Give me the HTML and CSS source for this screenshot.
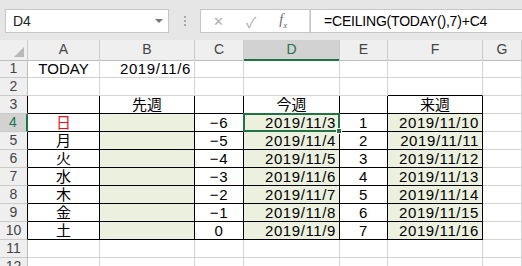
FILE: index.html
```html
<!DOCTYPE html>
<html lang="ja">
<head>
    <meta charset="UTF-8">
    <meta name="viewport" content="width=device-width, initial-scale=1.0">
    <title>CEILING TODAY</title>
    <link rel="stylesheet" href="styles.css">
</head>
<body>
    <!-- 数式バー -->
    <div class="toolbar">
        <div class="namebox">D4<span class="arrow"></span></div>
        <div class="dots"><i></i><i></i><i></i></div>
        <div class="fbuttons">
            <span class="btn-x">✕</span>
            <span class="btn-ok">✓</span>
            <span class="btn-fx"><i>f</i><sub>x</sub></span>
        </div>
        <div class="formula">=CEILING(TODAY(),7)+C4</div>
    </div>

    <!-- シート -->
    <div class="sheet">
        <div class="row head">
            <div class="ch corner"><span class="tri"></span></div>
            <div class="ch">A</div>
            <div class="ch">B</div>
            <div class="ch">C</div>
            <div class="ch active-col">D</div>
            <div class="ch">E</div>
            <div class="ch">F</div>
            <div class="ch">G</div>
        </div>
        <div class="row">
            <div class="rh">1</div>
            <div class="c ctr">TODAY</div>
            <div class="c num">2019/11/6</div>
            <div class="c"></div><div class="c"></div><div class="c"></div><div class="c"></div><div class="c"></div>
        </div>
        <div class="row">
            <div class="rh">2</div>
            <div class="c"></div><div class="c"></div><div class="c"></div><div class="c"></div><div class="c"></div>
            <div class="c bb"></div>
            <div class="c"></div>
        </div>
        <div class="row">
            <div class="rh br">3</div>
            <div class="c br bb"></div>
            <div class="c br bb jp">先週</div>
            <div class="c br bb"></div>
            <div class="c br bb jp">今週</div>
            <div class="c br bb"></div>
            <div class="c br bb jp">来週</div>
            <div class="c"></div>
        </div>
        <div class="row">
            <div class="rh active-row">4</div>
            <div class="c br bb jp red">日</div>
            <div class="c br bb fill"></div>
            <div class="c br bb ctr num-c">−6</div>
            <div class="c br bb fill num sel-cell">2019/11/3<span class="sel"><span class="handle"></span></span></div>
            <div class="c br bb ctr num-c">1</div>
            <div class="c br bb fill num">2019/11/10</div>
            <div class="c"></div>
        </div>
        <div class="row">
            <div class="rh br">5</div>
            <div class="c br bb jp">月</div>
            <div class="c br bb fill"></div>
            <div class="c br bb ctr num-c">−5</div>
            <div class="c br bb fill num">2019/11/4</div>
            <div class="c br bb ctr num-c">2</div>
            <div class="c br bb fill num">2019/11/11</div>
            <div class="c"></div>
        </div>
        <div class="row">
            <div class="rh br">6</div>
            <div class="c br bb jp">火</div>
            <div class="c br bb fill"></div>
            <div class="c br bb ctr num-c">−4</div>
            <div class="c br bb fill num">2019/11/5</div>
            <div class="c br bb ctr num-c">3</div>
            <div class="c br bb fill num">2019/11/12</div>
            <div class="c"></div>
        </div>
        <div class="row">
            <div class="rh br">7</div>
            <div class="c br bb jp">水</div>
            <div class="c br bb fill"></div>
            <div class="c br bb ctr num-c">−3</div>
            <div class="c br bb fill num">2019/11/6</div>
            <div class="c br bb ctr num-c">4</div>
            <div class="c br bb fill num">2019/11/13</div>
            <div class="c"></div>
        </div>
        <div class="row">
            <div class="rh br">8</div>
            <div class="c br bb jp">木</div>
            <div class="c br bb fill"></div>
            <div class="c br bb ctr num-c">−2</div>
            <div class="c br bb fill num">2019/11/7</div>
            <div class="c br bb ctr num-c">5</div>
            <div class="c br bb fill num">2019/11/14</div>
            <div class="c"></div>
        </div>
        <div class="row">
            <div class="rh br">9</div>
            <div class="c br bb jp">金</div>
            <div class="c br bb fill"></div>
            <div class="c br bb ctr num-c">−1</div>
            <div class="c br bb fill num">2019/11/8</div>
            <div class="c br bb ctr num-c">6</div>
            <div class="c br bb fill num">2019/11/15</div>
            <div class="c"></div>
        </div>
        <div class="row">
            <div class="rh br">10</div>
            <div class="c br bb jp">土</div>
            <div class="c br bb fill"></div>
            <div class="c br bb ctr num-c">0</div>
            <div class="c br bb fill num">2019/11/9</div>
            <div class="c br bb ctr num-c">7</div>
            <div class="c br bb fill num">2019/11/16</div>
            <div class="c"></div>
        </div>
        <div class="row">
            <div class="rh">11</div>
            <div class="c"></div><div class="c"></div><div class="c"></div><div class="c"></div><div class="c"></div><div class="c"></div><div class="c"></div>
        </div>
        <div class="row">
            <div class="rh">12</div>
            <div class="c"></div><div class="c"></div><div class="c"></div><div class="c"></div><div class="c"></div><div class="c"></div><div class="c"></div>
        </div>
    </div>
</body>
</html>
```

FILE: styles.css
```css
* {
    margin: 0;
    padding: 0;
    box-sizing: border-box;
}

body {
    background-color: #fff;
    font-family: 'Liberation Sans', 'Noto Sans CJK JP', sans-serif;
    color: #000;
    overflow: hidden;
}

/* 数式バー */
.toolbar {
    height: 40px;
    background-color: #e6e6e6;
    display: flex;
    align-items: flex-start;
    padding-top: 9px;
    padding-left: 5px;
}

.namebox {
    position: relative;
    width: 164px;
    height: 24px;
    background-color: #fff;
    border: 1px solid #c6c6c6;
    font-size: 14px;
    line-height: 22px;
    padding-left: 7px;
    color: #222;
}

.arrow {
    position: absolute;
    right: 5px;
    top: 9px;
    border-left: 4px solid transparent;
    border-right: 4px solid transparent;
    border-top: 4px solid #777;
}

.dots {
    width: 31px;
    height: 24px;
    display: flex;
    flex-direction: column;
    align-items: center;
    justify-content: center;
    gap: 2px;
}

.dots i {
    width: 2px;
    height: 2px;
    background-color: #a8a8a8;
}

.fbuttons {
    width: 110px;
    height: 24px;
    background-color: #fff;
    border: 1px solid #c6c6c6;
    border-right: 1px solid #d8d8d8;
    display: flex;
    align-items: center;
    color: #b0b0b0;
}

.btn-x {
    margin-left: 12px;
    font-size: 13px;
}

.btn-ok {
    margin-left: 22px;
    font-size: 15px;
}

.btn-fx {
    margin-left: 23px;
    font-family: 'Liberation Serif', serif;
    font-size: 14px;
    color: #666;
}

.btn-fx sub {
    font-size: 9px;
    font-style: italic;
}

.formula {
    flex: 1;
    height: 24px;
    background-color: #fff;
    border: 1px solid #c6c6c6;
    border-right: none;
    font-size: 14px;
    line-height: 22px;
    padding-left: 13px;
    letter-spacing: -0.2px;
}

/* シート */
.row {
    display: grid;
    grid-template-columns: 28px 72px 95px 49px 96px 48px 95px 1fr;
    height: 18px;
}

.row.head {
    height: 20px;
}

.ch {
    background-color: #efefef;
    border-right: 1px solid #cacaca;
    border-bottom: 1px solid #bdbdbd;
    font-size: 14px;
    line-height: 19px;
    text-align: center;
    color: #444;
}

.corner {
    position: relative;
}

.tri {
    position: absolute;
    right: 3px;
    bottom: 3px;
    border-left: 10px solid transparent;
    border-bottom: 10px solid #b8b8b8;
}

.active-col {
    background-color: #d2d2d2;
    border-bottom: 2px solid #217346;
    color: #217346;
}

.rh {
    background-color: #efefef;
    border-right: 1px solid #bdbdbd;
    border-bottom: 1px solid #cacaca;
    font-size: 14px;
    line-height: 17px;
    text-align: center;
    color: #444;
}

.active-row {
    background-color: #d2d2d2;
    border-right: 2px solid #217346;
    color: #217346;
}

.c {
    border-right: 1px solid #d4d4d4;
    border-bottom: 1px solid #d4d4d4;
    font-size: 15px;
    line-height: 17px;
    white-space: nowrap;
}

.c.br, .rh.br {
    border-right-color: #000;
}

.c.bb {
    border-bottom-color: #000;
}

.fill {
    background-color: #ebf1de;
}

.ctr, .jp {
    text-align: center;
}

.num {
    text-align: right;
    padding-right: 3px;
    letter-spacing: 0.6px;
}

.num-c {
    letter-spacing: 0.6px;
}

.red {
    color: #e8101e;
}

/* 選択セル */
.sel-cell {
    position: relative;
}

.sel {
    position: absolute;
    left: -1px;
    top: -1px;
    right: -1px;
    bottom: -1px;
    border: 2px solid #217346;
}

.handle {
    position: absolute;
    right: -4px;
    bottom: -4px;
    width: 6px;
    height: 6px;
    background-color: #217346;
    border: 1px solid #fff;
}
```
